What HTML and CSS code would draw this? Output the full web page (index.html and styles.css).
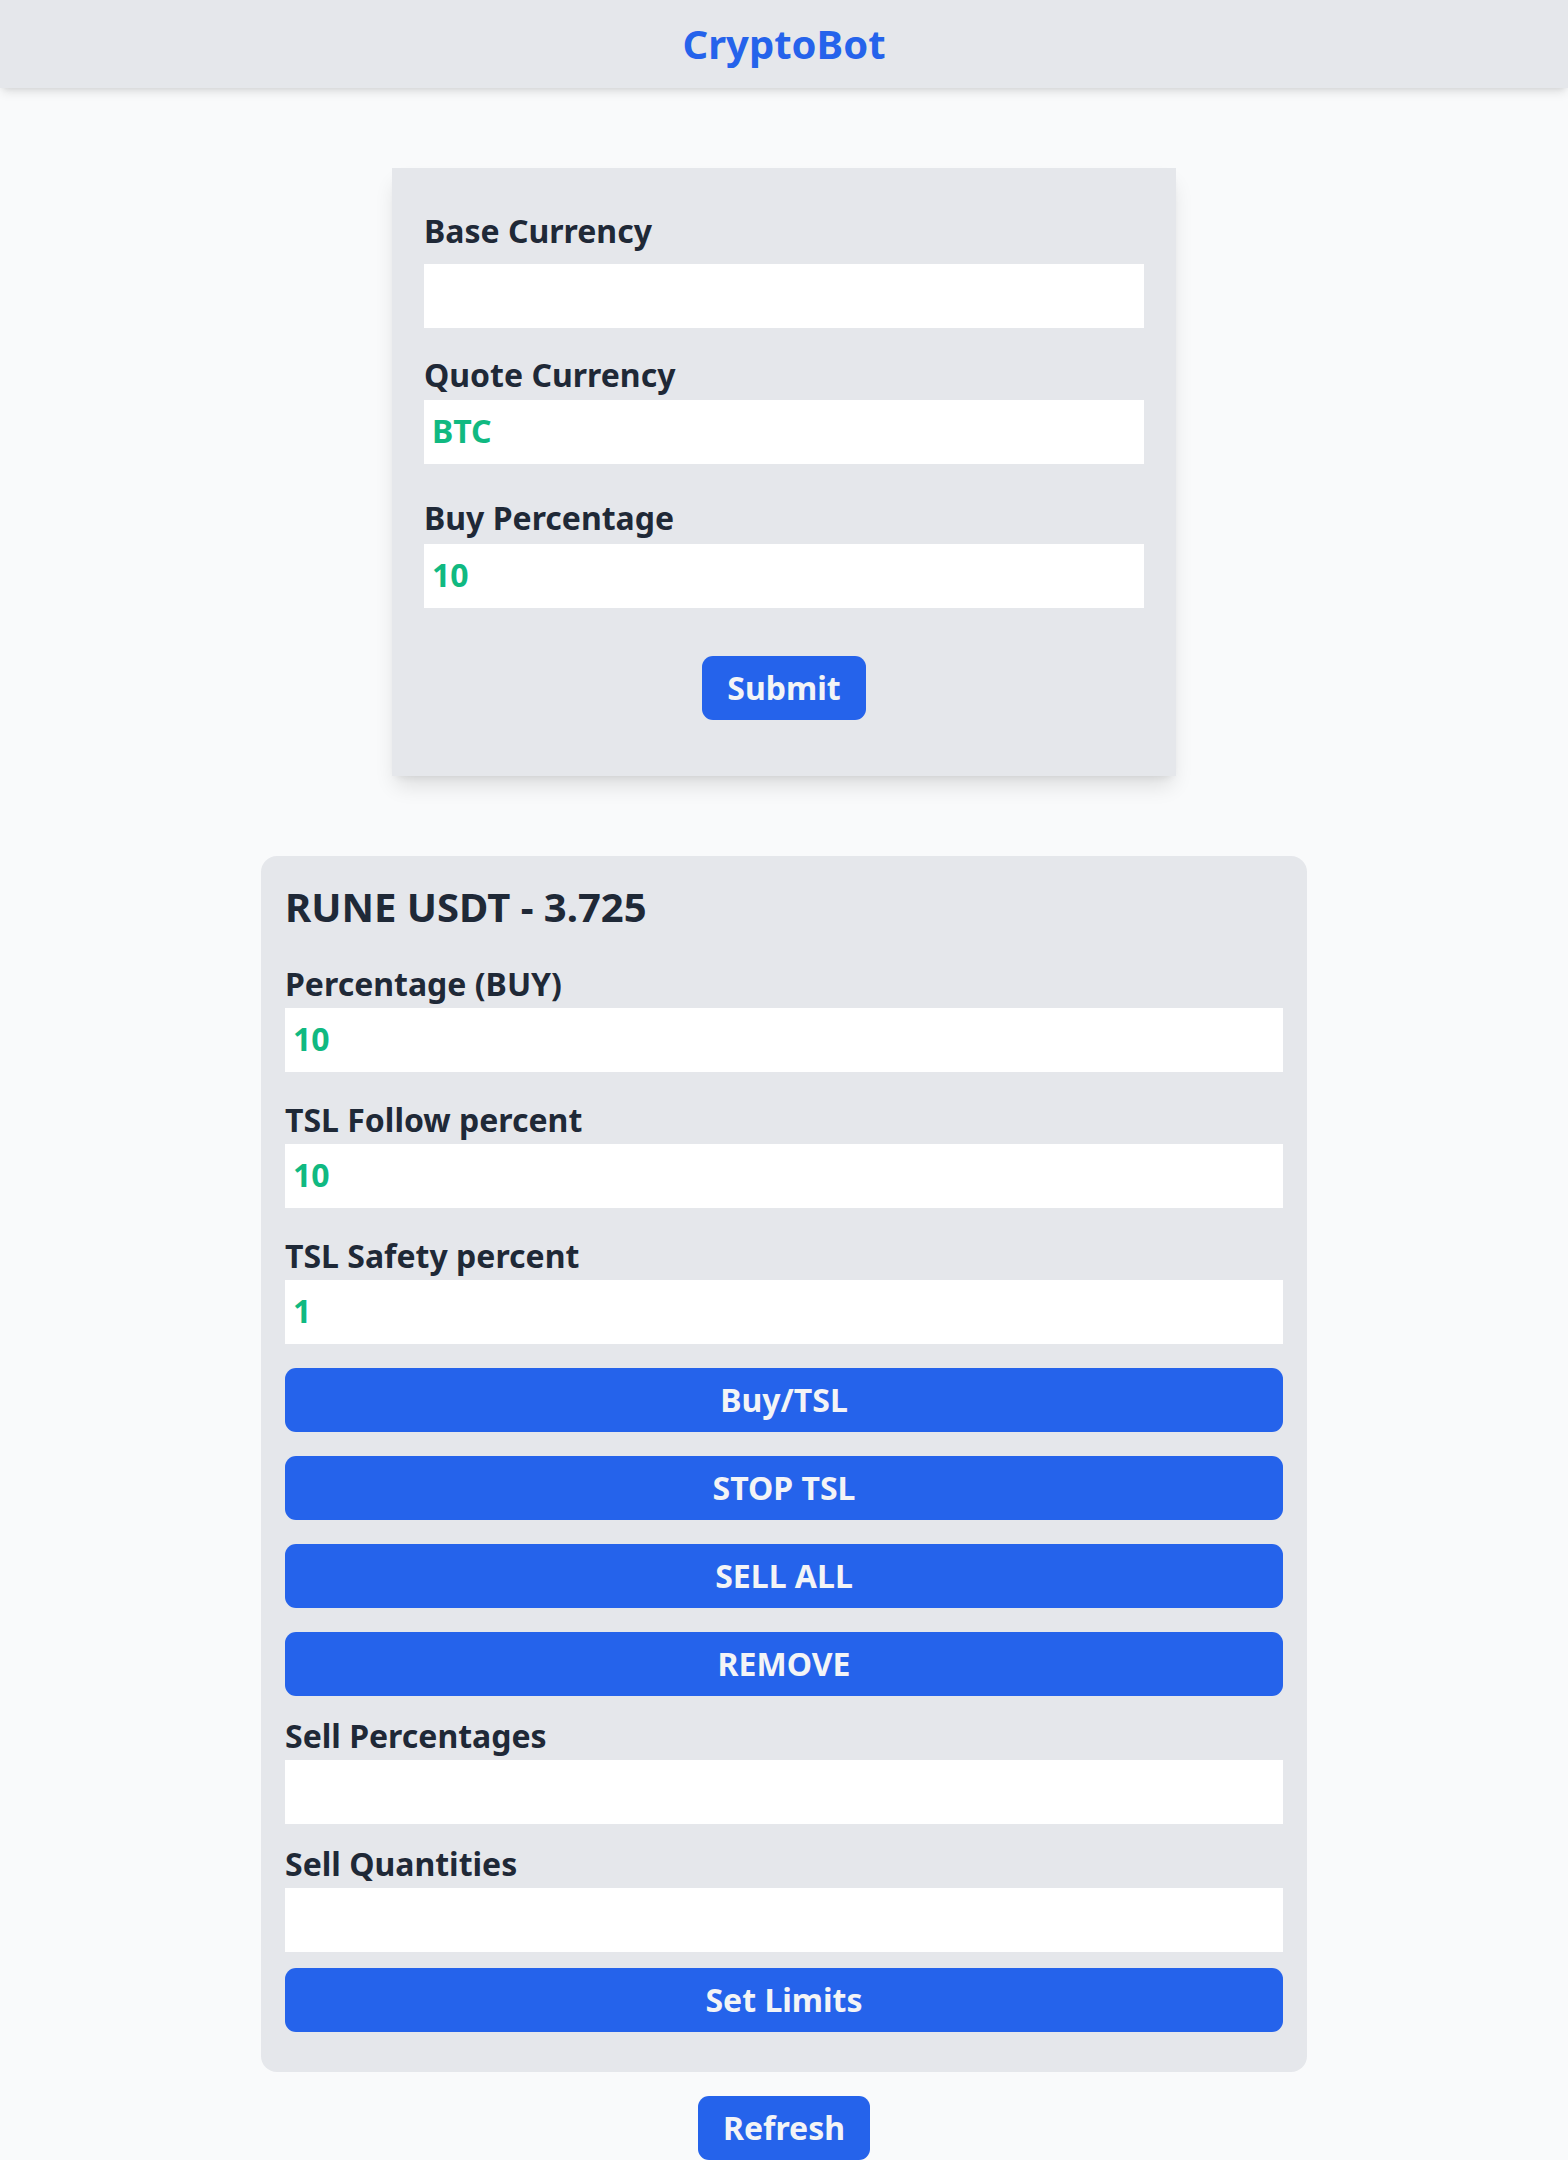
FILE: index.html
```html
<!DOCTYPE html>
<html lang="en">
<head>
<meta charset="utf-8">
<title>CryptoBot</title>
<link rel="stylesheet" href="styles.css">
</head>
<body>
<header class="topbar">
  <h1 class="brand">CryptoBot</h1>
</header>
<main class="main">
  <form class="pair-form">
    <label class="field-label first">Base Currency</label>
    <input class="field-input" type="text" value="">
    <label class="field-label second">Quote Currency</label>
    <input class="field-input" type="text" value="BTC">
    <label class="field-label third">Buy Percentage</label>
    <input class="field-input" type="text" value="10">
    <div class="form-actions">
      <button class="btn" type="button">Submit</button>
    </div>
  </form>

  <section class="pair-card">
    <h2 class="pair-title">RUNE USDT - 3.725</h2>
    <label class="card-label lead">Percentage (BUY)</label>
    <input class="field-input" type="text" value="10">
    <label class="card-label">TSL Follow percent</label>
    <input class="field-input" type="text" value="10">
    <label class="card-label">TSL Safety percent</label>
    <input class="field-input" type="text" value="1">
    <div class="btn-stack">
      <button class="btn btn-wide" type="button">Buy/TSL</button>
      <button class="btn btn-wide" type="button">STOP TSL</button>
      <button class="btn btn-wide" type="button">SELL ALL</button>
      <button class="btn btn-wide" type="button">REMOVE</button>
    </div>
    <label class="card-label tight">Sell Percentages</label>
    <input class="field-input" type="text" value="">
    <label class="card-label tight">Sell Quantities</label>
    <input class="field-input" type="text" value="">
    <button class="btn btn-wide limits" type="button">Set Limits</button>
  </section>

  <button class="btn refresh" type="button">Refresh</button>
</main>
</body>
</html>
```

FILE: styles.css
```css
* { box-sizing: border-box; }

html, body {
  margin: 0;
  padding: 0;
}

body {
  background: #f9fafb;
  font-family: "Noto Sans", "Open Sans", "DejaVu Sans", sans-serif;
  color: #1f2937;
}

.topbar {
  position: relative;
  z-index: 2;
  height: 88px;
  background: #e5e7eb;
  box-shadow: 0 6px 10px -2px rgba(0, 0, 0, 0.1), 0 3px 6px -3px rgba(0, 0, 0, 0.1);
  padding-top: 17px;
  text-align: center;
}

.brand {
  margin: 0;
  font-size: 40px;
  line-height: 53px;
  font-weight: 700;
  color: #2563eb;
}

.main {
  display: flex;
  flex-direction: column;
  align-items: center;
}

.pair-form {
  width: 784px;
  margin-top: 80px;
  background: #e5e7eb;
  padding: 42px 32px 56px;
  display: flex;
  flex-direction: column;
  box-shadow: 0 13px 20px -4px rgba(0, 0, 0, 0.12), 0 5px 8px -5px rgba(0, 0, 0, 0.1);
}

.field-label,
.card-label {
  display: block;
  font-size: 32px;
  line-height: 42.67px;
  font-weight: 700;
  color: #1f2937;
}

.field-label.first { margin-bottom: 11.33px; }
.field-label.second { margin-top: 26px; margin-bottom: 3.33px; }
.field-label.third { margin-top: 33px; margin-bottom: 4.33px; }

.field-input {
  display: block;
  width: 100%;
  height: 64px;
  border: none;
  outline: none;
  background: #ffffff;
  padding: 0 8px 3px;
  font-family: inherit;
  font-size: 32px;
  font-weight: 700;
  color: #10b981;
}

.form-actions {
  display: flex;
  justify-content: center;
  margin-top: 48px;
}

.btn {
  height: 64px;
  padding: 0 25px;
  border: none;
  border-radius: 11px;
  background: #2563eb;
  color: #f3f4f6;
  font-family: inherit;
  font-size: 32px;
  font-weight: 700;
  line-height: 1;
  cursor: pointer;
}

.pair-card {
  width: 1046px;
  margin-top: 80px;
  background: #e5e7eb;
  border-radius: 16px;
  padding: 24px 24px 40px;
  display: flex;
  flex-direction: column;
}

.pair-title {
  margin: 0;
  font-size: 40px;
  line-height: 53.33px;
  font-weight: 700;
  color: #1f2937;
}

.card-label {
  margin-top: 26.83px;
  margin-bottom: 2.5px;
}

.card-label.lead { margin-top: 29.5px; }
.card-label.tight { margin-top: 18.5px; margin-bottom: 2.83px; }

.btn-stack {
  display: flex;
  flex-direction: column;
  gap: 24px;
  margin-top: 24px;
}

.btn-wide {
  width: 100%;
}

.limits {
  margin-top: 16px;
}

.refresh {
  margin-top: 24px;
}
```
